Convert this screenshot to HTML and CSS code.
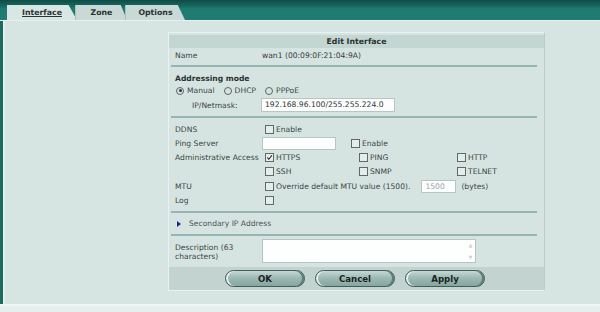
FILE: index.html
```html
<!DOCTYPE html>
<html lang="en">
<head>
  <meta charset="UTF-8">
  <title>Edit Interface</title>
  <link rel="stylesheet" href="styles.css">
</head>
<body>
<div class="app">
  <!-- Top bar with tabs -->
  <div class="topbar">
    <div class="tabs">
      <span class="tab active">Interface</span>
      <span class="tab">Zone</span>
      <span class="tab">Options</span>
    </div>
  </div>

  <div class="main">
    <div class="edge"></div>
    <div class="content">
      <div class="panel">
        <div class="panel-title">Edit Interface</div>

        <div class="row">
          <span class="label">Name</span>
          <span class="value">wan1 (00:09:0F:21:04:9A)</span>
        </div>
        <div class="sep"></div>

        <div class="row"><span class="heading">Addressing mode</span></div>
        <div class="row radios">
          <span class="opt"><span class="radio on"></span>Manual</span>
          <span class="opt"><span class="radio"></span>DHCP</span>
          <span class="opt"><span class="radio"></span>PPPoE</span>
        </div>
        <div class="row ip-row">
          <span class="label sub">IP/Netmask:</span>
          <span class="field ip">192.168.96.100/255.255.224.0</span>
        </div>
        <div class="sep"></div>

        <div class="row section-top">
          <span class="label">DDNS</span>
          <span class="checks"><span class="opt"><span class="cb"></span>Enable</span></span>
        </div>
        <div class="row">
          <span class="label">Ping Server</span>
          <span class="field ping"></span>
          <span class="opt ping-enable"><span class="cb"></span>Enable</span>
        </div>
        <div class="row">
          <span class="label">Administrative Access</span>
          <span class="checks grid3">
            <span class="opt"><span class="cb on"><svg viewBox="0 0 9 9" width="9" height="9"><path d="M1.5 4.5 L3.6 6.8 L7.6 1.6" fill="none" stroke="#1a1a1a" stroke-width="1.3"/></svg></span>HTTPS</span>
            <span class="opt"><span class="cb"></span>PING</span>
            <span class="opt"><span class="cb"></span>HTTP</span>
          </span>
        </div>
        <div class="row">
          <span class="label"></span>
          <span class="checks grid3">
            <span class="opt"><span class="cb"></span>SSH</span>
            <span class="opt"><span class="cb"></span>SNMP</span>
            <span class="opt"><span class="cb"></span>TELNET</span>
          </span>
        </div>
        <div class="row mtu-row">
          <span class="label">MTU</span>
          <span class="checks"><span class="opt"><span class="cb"></span>Override default MTU value (1500).</span></span>
          <span class="field mtu">1500</span>
          <span class="unit">(bytes)</span>
        </div>
        <div class="row">
          <span class="label">Log</span>
          <span class="checks"><span class="cb"></span></span>
        </div>
        <div class="sep after-log"></div>

        <div class="row secondary">
          <span class="arrow"></span>Secondary IP Address
        </div>
        <div class="sep after-secondary"></div>

        <div class="desc-row">
          <span class="label desc-label">Description (63<br>characters)</span>
          <div class="textarea">
            <div class="scroll"><span>&#9650;</span><span>&#9660;</span></div>
          </div>
        </div>

        <div class="button-bar">
          <span class="btn">OK</span>
          <span class="btn">Cancel</span>
          <span class="btn">Apply</span>
        </div>
      </div>
    </div>
  </div>
  <div class="footer"></div>
</div>
</body>
</html>
```

FILE: styles.css
```css
* {
  margin: 0;
  padding: 0;
  box-sizing: border-box;
}

body {
  font-family: 'DejaVu Sans', Verdana, sans-serif;
  font-size: 7.6px;
  color: #3c4644;
  background-color: #e3eeec;
  width: 600px;
  height: 312px;
  overflow: hidden;
}

.app {
  display: flex;
  flex-direction: column;
  height: 312px;
}

/* Top bar */
.topbar {
  height: 21px;
  background: linear-gradient(to bottom, #0f4c45 0%, #17685f 30%, #1f7b71 45%, #217d73 100%);
  border-bottom: 1px solid #e6f0ee;
  padding-left: 7px;
  display: flex;
  align-items: flex-end;
}

.tabs {
  display: flex;
  height: 15px;
}

.tab {
  font-weight: bold;
  font-size: 7.8px;
  color: #2c3432;
  background-color: #c8d9d6;
  width: 52px;
  display: flex;
  align-items: center;
  justify-content: center;
  clip-path: polygon(0 0, 88% 0, 100% 100%, 0 100%);
  margin-right: -2px;
  border-left: 1px solid #a9c1bd;
}

.tab.active {
  width: 70px;
  background-color: #d9e7e4;
  text-decoration: underline;
  border-left: none;
}

.tab:last-child {
  width: 60px;
}

/* Main area */
.main {
  display: flex;
  height: 283px;
}

.edge {
  width: 5px;
  background-color: #1d6a5f;
  border-right: 2px solid #e2eeeb;
}

.content {
  flex-grow: 1;
  background-color: #d6e5e2;
  padding: 11px 0 0 163px;
}

.footer {
  flex-grow: 1;
  border-top: 2px solid #f1f7f6;
  background-color: #e5efed;
}

/* Panel */
.panel {
  width: 377px;
  height: 259px;
  background-color: #d5e4e1;
  border: 1px solid #e9f2f0;
  border-right-color: #b9cecb;
  padding-top: 2px;
  display: flex;
  flex-direction: column;
}

.panel-title {
  height: 13px;
  line-height: 13px;
  background-color: #c3d6d2;
  text-align: center;
  font-weight: bold;
  color: #2a3230;
  font-size: 7.8px;
  flex-shrink: 0;
}

.row {
  display: flex;
  align-items: center;
  height: 14px;
  padding-left: 6px;
  flex-shrink: 0;
}

.label {
  width: 87px;
  flex-shrink: 0;
}

.label.sub {
  padding-left: 17px;
}

.value {
  color: #333b39;
}

.heading {
  font-weight: bold;
  color: #2a3230;
  padding-top: 2px;
}

.sep {
  height: 2px;
  flex-shrink: 0;
  background-color: #93b7b0;
  margin: 3px 7px 3px 2px;
}

.sep.after-log {
  margin-top: 4px;
}

.sep.after-secondary {
  margin-bottom: 2px;
}

.radios {
  height: 13px;
  padding-left: 7px;
  gap: 9px;
}

.opt {
  display: flex;
  align-items: center;
  white-space: nowrap;
}

.radio {
  width: 8px;
  height: 8px;
  border: 1px solid #5b6664;
  border-radius: 50%;
  margin-right: 3px;
  display: flex;
  align-items: center;
  justify-content: center;
}

.radio.on::after {
  content: "";
  width: 3px;
  height: 3px;
  border-radius: 50%;
  background-color: #2b3331;
}

.ip-row {
  height: 16px;
}

.field {
  background-color: #fdfefe;
  border: 1px solid #b7c6c3;
  height: 14px;
  line-height: 12px;
  padding-left: 3px;
  color: #2e3634;
}

.field.ip {
  width: 134px;
  margin-left: -1px;
}

.section-top {
  margin-top: 1px;
}

.checks {
  padding-left: 3px;
  display: flex;
}

.grid3 {
  display: grid;
  grid-template-columns: 94px 98px auto;
}

.cb {
  width: 9px;
  height: 9px;
  border: 1px solid #5f6a68;
  background-color: #e3eeec;
  margin-right: 2px;
  display: inline-flex;
  align-items: center;
  justify-content: center;
}

.cb svg {
  display: block;
}

.field.ping {
  width: 74px;
  height: 13px;
}

.ping-enable {
  margin-left: 15px;
}

.mtu-row {
  margin-top: 1px;
}

.field.mtu {
  width: 35px;
  height: 13px;
  margin-left: 11px;
  color: #9aa3a1;
}

.unit {
  margin-left: 5px;
}

.secondary {
  height: 15px;
  padding-left: 8px;
  color: #4c5654;
}

.arrow {
  width: 0;
  height: 0;
  border-top: 3.5px solid transparent;
  border-bottom: 3.5px solid transparent;
  border-left: 4px solid #1b2a8c;
  margin-right: 8px;
}

.desc-row {
  display: flex;
  padding: 1px 0 0 6px;
  flex-grow: 1;
}

.desc-label {
  padding-top: 4px;
  line-height: 9px;
}

.textarea {
  width: 214px;
  height: 24px;
  background-color: #fdfefe;
  border: 1px solid #b5c4c1;
  display: flex;
  justify-content: flex-end;
}

.scroll {
  width: 9px;
  display: flex;
  flex-direction: column;
  justify-content: space-between;
  font-size: 5px;
  color: #c9d1cf;
  text-align: center;
  padding: 2px 0;
}

/* Buttons */
.button-bar {
  height: 23px;
  flex-shrink: 0;
  background-color: #c3d3d0;
  display: flex;
  align-items: center;
  gap: 10px;
  padding-left: 56px;
}

.btn {
  width: 80px;
  height: 17px;
  border-radius: 9px;
  border: 1px solid #415e58;
  background: linear-gradient(to bottom, #c6d8d4 0%, #9dbab4 45%, #86a69f 100%);
  box-shadow: inset 2px 0 0 #e8f1ef, inset -2px 0 0 #5e7d77;
  display: flex;
  align-items: center;
  justify-content: center;
  font-weight: bold;
  font-size: 8.6px;
  color: #1d2322;
}
```
